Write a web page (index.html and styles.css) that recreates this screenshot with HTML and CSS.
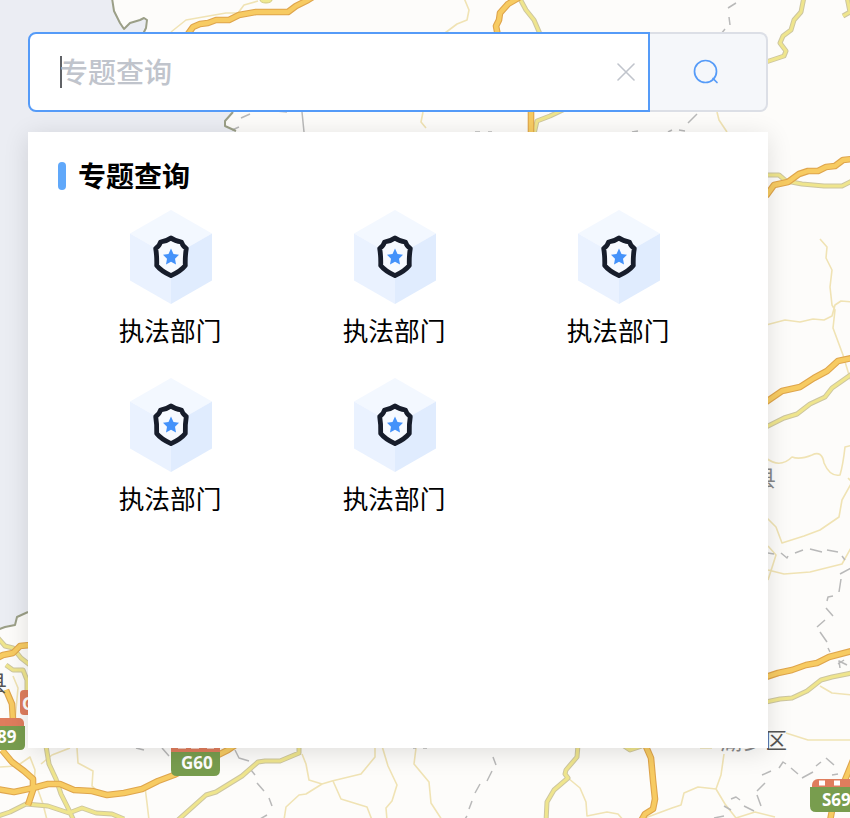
FILE: index.html
```html
<!DOCTYPE html>
<html lang="zh-CN">
<head>
<meta charset="utf-8">
<title>专题查询</title>
<link rel="stylesheet" href="styles.css">
</head>
<body>
<svg class="map" viewBox="0 0 850 818" aria-hidden="true">
  <defs>
    <g id="highways">
      <path d="M188 34L193 27L200 24L208 23L216 20L229 20L239 15L256 12L288 12L296 6L308 0L316-5"/>
      <path d="M520-3L508 4L500 13L499 20L496 26L498 36M531 108V136"/>
      <path d="M766 196L774 185L788 182L799 174L808 171L818 171L826 167L835 166L843 160L852 159"/>
      <path d="M766 402L782 391L800 387L814 378L827 371L838 361L852 358"/>
      <path d="M766 677L778 673L792 670L806 665L817 663L829 657L852 651"/>
      <path d="M-3 658L3 655L13 653L20 646L30 645M6 690L12 704L13 720M2 750L12 762L24 771L33 779L33 790L28 805"/>
      <path d="M-3 789L14 792L33 788L48 784L60 784L74 790L92 791L107 795L124 793L142 789L158 781L174 775L190 767L208 760L228 750L240 742"/>
      <path d="M644 742L651 758L653 780L655 799L653 809L645 814L641 821"/>
      <path d="M854 758L845 780L835 795L830 821"/>
    </g>
    <g id="roads">
      <path d="M519-3L526 10L534 20L540 34M534 134L537 121L550 116L567 108"/>
      <path d="M804-3L801 12L794 20L791 30L783 36L780 43L786 51L784 56L766 62M847-3L850 12L843 16"/>
      <path d="M766 175H779L786 181L802 184L824 186L842 186L852 181"/>
      <path d="M766 427L784 418L797 414L810 404L825 397L832 388L852 374"/>
      <path d="M766 702L780 699L792 698L807 691L821 680L832 677L852 673"/>
      <path d="M-2 638L5 646L13 648L21 658L30 665M6 665L13 670H23L27 680V690"/>
      <path d="M46 746L49 764L56 779L61 794L68 808L74 821M-2 816L10 812L26 804L48 806L69 813L82 808L96 813L112 814L124 819"/>
      <path d="M178 820L206 795L216 792L242 776L258 762L265 761H280L299 753V746"/>
      <path d="M578 745L577 757L566 770L565 774L568 778L554 790L547 802L546 822"/>
      <path d="M624 746L630 750L642 746"/>
    </g>
  </defs>
  <path class="land" d="M112-2L114 11L120 23L124 29L130 23L140 20L144 18L147 20L146 28L143 34L152 75L233 112L225 121L225 126L236 131L100 400L28 612L17 617L15 625L5 627L-3 630V820H852V-2Z"/>
  <path class="lane" d="M171 32L186 20L203 17L226 13L238 13L244 5L258 1M464-2L469 10L467 20L457 24L445 33M423 112L421 122L426 128M717 112L719 120L727 132"/>
  <path class="lane" d="M820 239L827 247L826 258L832 270L830 287L832 305L835 310L833 328L843 355L852 385M766 325L785 320L800 322L813 319L824 320L832 316L835 305L841 301L854 302"/>
  <path class="lane" d="M766 458Q780 469 792 457Q800 460 812 455Q822 450 824 463Q830 477 840 475Q843 465 845 447L853 445M848 478L852 482L842 500L839 517L820 530L804 536L782 543L776 527L766 517M768 546L776 555L768 580M768 570L784 574L810 572L842 564L852 546M820 686L832 693L852 695M786 733L808 740L852 740"/>
  <path class="lane" d="M13 676L18 688L15 720L17 736M0 767L17 766L30 757L35 770L34 786M41 764L52 755L70 748M77 748L78 763L93 771L92 786L101 794M145 787L147 803L149 820M38 790L43 804L47 820"/>
  <path class="lane" d="M302 754L306 764L309 780L322 784L332 781L361 774L375 757V745M322 784L306 794L299 795L286 807L284 820M333 781L341 799L367 807L372 820M382 746L388 766L397 785L392 801L386 808L387 820M416 748L414 764L429 782L431 803L442 820"/>
  <path class="lane" d="M568 778L580 788L586 802L587 816L607 812L618 814L624 821M645 818L672 808L681 805L684 793L698 787L716 789L721 775L724 754M716 789L725 804L736 818L755 812L775 817M700 748H712"/>
  <path class="boundary" d="M736 3L728 8M729 17L730 25M725 29L721 34M241 118L250 114M232 130L239 127M302 112L304 132M688 123L697 114M668 132L672 130M679 130L685 131M276 111L287 112M475 132H480M488 132H492M632 132L638 131"/>
  <path class="boundary" d="M768 553L774 554M781 553L787 558L788 556M795 553L803 550M810 549L822 552M827 550L838 552M842 556L845 560M851 568L840 574M841 579L839 592M833 596L828 597L827 601M826 608L833 616M825 620L817 627M820 632L827 642M828 648L830 652"/>
  <path class="boundary" d="M136 748L144 750M162 748L169 756M235 750L239 758L249 761M251 770L255 775M257 783L264 791M269 798L272 806M267 815L260 819M493 757L496 765M492 771L487 781M480 784L475 793M472 801L469 809M467 816L465 819"/>
  <path class="boundary" d="M762 775L771 771M779 768L783 762L786 764M791 768L798 774M802 778L813 772M816 766L821 762M826 758L834 765M832 775L838 774M757 791L765 783M757 795L761 806M731 799L736 797L740 800M744 806L754 811M724 806L731 810M714 818L724 816M838 664L844 660M840 668L839 661L847 665"/>
  <path class="coast" d="M112-2L114 11L120 23L124 29L130 23L140 20L144 18L147 20L146 28L143 34M233 112L225 121L225 126L236 131M28 612L17 617L15 625L5 627L-3 630"/>
  <use class="road-edge" href="#roads"/><use class="road-core" href="#roads"/>
  <use class="highway-edge" href="#highways"/><use class="highway-core" href="#highways"/>
  <ellipse class="junction" cx="266" cy="0" rx="6" ry="3"/>
  <text class="place" x="754" y="486">县</text>
  <text class="place dark" x="-15" y="691">县</text>
  <text class="place" x="720" y="749">湖</text>
  <text class="place" x="743" y="749">乡</text>
  <text class="place dark" x="765" y="748">区</text>
  <path class="boundary" d="M413 748H416M423 748H427"/>
  <rect class="shield-top" x="20" y="690" width="30" height="25" rx="4"/>
  <text class="shield-text" x="22" y="710">G</text>
  <rect class="shield-top" x="-26" y="718" width="50" height="25" rx="5"/>
  <path class="shield-body" d="M-26 726H25V745Q25 750 20 750H-26Z"/>
  <text class="shield-text" x="-3" y="743">89</text>
  <rect class="shield-top" x="171" y="740" width="49" height="25"/>
  <path class="shield-marks short" d="M178 748H186M191 748H199M207 748H214"/>
  <path class="shield-body" d="M171 752H220V770Q220 776 214 776H177Q171 776 171 770Z"/>
  <text class="shield-text" x="181" y="769">G60</text>
  <rect class="shield-top" x="812" y="779" width="55" height="26" rx="6"/>
  <path class="shield-marks" d="M819 783H825M834 783H840"/>
  <path class="shield-body" d="M810 787H860V812H816Q810 812 810 806Z"/>
  <text class="shield-text" x="822" y="806">S69</text>
</svg>

<svg class="symbols" aria-hidden="true">
  <symbol id="badge" viewBox="0 0 82 94">
    <path fill="#f3f8ff" d="M41 0L82 23.5L41 47L0 23.5Z"/>
    <path fill="#eaf2ff" d="M0 23.5L41 47V94L0 70.5Z"/>
    <path fill="#e0ecfe" d="M82 23.5L41 47V94L82 70.5Z"/>
    <path fill="#f7faff" stroke="#171d2b" stroke-width="4.800" stroke-linejoin="round" d="M41 28Q45 31 51.500 32Q52.500 36 56.300 38.500Q55 46 55.300 55.500Q51 61 41 65.600Q31 61 26.700 55.500Q27 46 25.700 38.500Q29.500 36 30.500 32Q37 31 41 28Z"/>
    <path fill="#4492fa" d="M41 38.500L43.500 44L49 44.700L45 48.700L46 54.500L41 51.800L36 54.500L37 48.700L33 44.700L38.500 44Z"/>
  </symbol>
</svg>

<main class="search">
  <form class="search-bar">
    <div class="field">
      <span class="caret"></span>
      <span class="placeholder">专题查询</span>
      <svg class="clear" viewBox="0 0 18 18"><path d="M1 1L17 17M17 1L1 17"/></svg>
    </div>
    <button class="submit" type="button" aria-label="查询">
      <svg viewBox="0 0 26 26"><circle cx="12.500" cy="12.500" r="11"/><path d="M20 19.500L24 23.500"/></svg>
    </button>
  </form>
  <section class="panel">
    <h2 class="title">专题查询</h2>
    <ul class="topics">
      <li class="topic"><svg><use href="#badge"/></svg><span>执法部门</span></li>
      <li class="topic"><svg><use href="#badge"/></svg><span>执法部门</span></li>
      <li class="topic"><svg><use href="#badge"/></svg><span>执法部门</span></li>
      <li class="topic"><svg><use href="#badge"/></svg><span>执法部门</span></li>
      <li class="topic"><svg><use href="#badge"/></svg><span>执法部门</span></li>
    </ul>
  </section>
</main>
</body>
</html>
```

FILE: styles.css
```css
* { box-sizing: border-box; }
body {
  margin: 0;
  height: 818px;
  overflow: hidden;
  background: #ebedf3;
  font-family: "Noto Sans CJK SC", sans-serif;
  color: #000;
}
.map {
  position: absolute;
  left: 0;
  top: 0;
  width: 850px;
  height: 818px;
  fill: none;
  stroke-linejoin: round;
}
.symbols { position: absolute; width: 0; height: 0; }
.land { fill: #fdfcfa; }
.coast { stroke: #9b9f87; stroke-width: 2; }
.lane { stroke: #f0e3b4; stroke-width: 1.6; }
.boundary { stroke: #b9b9b9; stroke-width: 1.5; }
.road-edge { stroke: #cdc6a0; stroke-width: 5; }
.road-core { stroke: #efe58d; stroke-width: 3; }
.highway-edge { stroke: #dfa54c; stroke-width: 6.600; }
.highway-core { stroke: #f7cb62; stroke-width: 4.400; }
.junction { fill: #efe990; stroke: #d3cb82; }
.place { fill: #888; font-size: 22px; }
.place.dark { fill: #555; }
.shield-top { fill: #df7d5d; }
.shield-body { fill: #789d4e; }
.shield-marks { stroke: #fff; stroke-width: 5; }
.shield-marks.short { stroke-width: 2; stroke-opacity: .6; }
.shield-text { fill: #fff; font: bold 17px "Noto Sans", sans-serif; }

.search { position: relative; width: 740px; margin: 32px 0 0 28px; }
.search-bar { display: flex; height: 80px; margin: 0; }
.field {
  display: flex;
  align-items: center;
  width: 622px;
  padding: 0 13px 0 30px;
  border: 2px solid #559bf8;
  border-radius: 8px 0 0 8px;
  background: #fff;
}
.caret { width: 2px; height: 32px; margin-right: -2px; background: #606266; }
.placeholder { padding-bottom: 2px; color: #c0c4cc; font-size: 28px; font-weight: 500; line-height: 40px; }
.clear { width: 18px; height: 18px; margin-left: auto; fill: none; stroke: #c0c4cc; stroke-width: 1.600; stroke-linecap: round; }
.submit {
  display: flex;
  align-items: center;
  justify-content: center;
  width: 118px;
  padding: 0 4px 1px 0;
  border: 2px solid #dcdfe6;
  border-left: 0;
  border-radius: 0 8px 8px 0;
  background: #f5f7fa;
}
.submit svg { width: 26px; height: 26px; fill: none; stroke: #559bf8; stroke-width: 1.700; stroke-linecap: round; }
.panel {
  height: 616px;
  margin-top: 20px;
  padding: 24px 30px;
  background: #fff;
  box-shadow: 0 4px 24px rgba(0, 0, 0, .12);
}
.title { display: flex; align-items: center; gap: 12px; height: 40px; margin: 0; padding-bottom: 2px; font-size: 28px; line-height: 38px; }
.title::before { content: ""; width: 8px; height: 28px; margin-top: 2px; border-radius: 4px; background: #60a8fa; }
.topics { display: grid; grid-template-columns: repeat(3, 224px); grid-auto-rows: 168px; margin: 14px 0 0 1px; padding: 0; list-style: none; }
.topic { display: flex; flex-direction: column; align-items: center; gap: 7px; font-size: 25.700px; line-height: 38px; }
.topic svg { width: 82px; height: 94px; }
.topic span { margin-right: 2px; }
```
